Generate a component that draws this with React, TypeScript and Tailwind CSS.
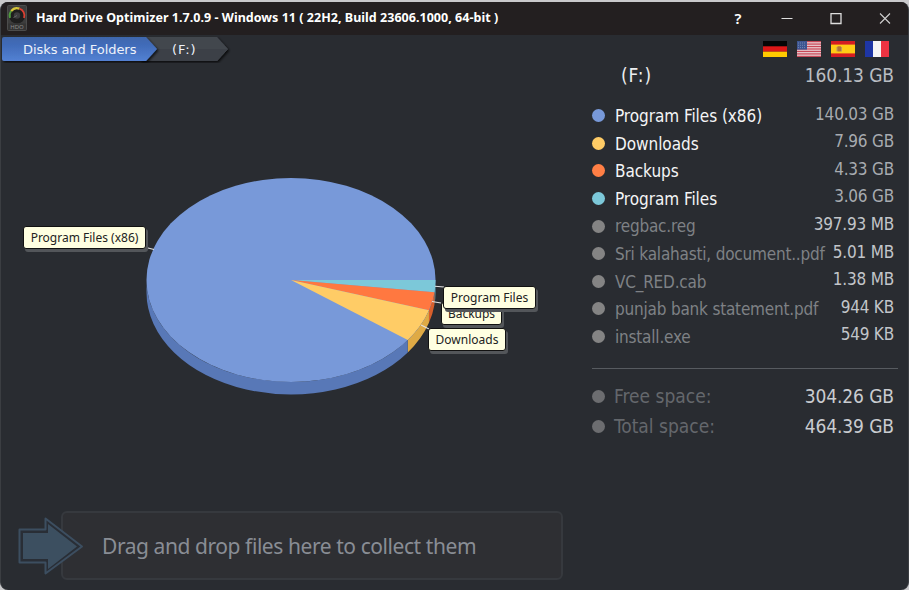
import React from 'react';
import clsx from 'clsx';

interface Entry {
  name: string;
  size: string;
  dot: string;
  folder?: boolean;
}

const entries: Entry[] = [
  { name: 'Program Files (x86)', size: '140.03 GB', dot: 'bg-[#7899d9]', folder: true },
  { name: 'Downloads', size: '7.96 GB', dot: 'bg-[#ffcc66]', folder: true },
  { name: 'Backups', size: '4.33 GB', dot: 'bg-[#ff7f45]', folder: true },
  { name: 'Program Files', size: '3.06 GB', dot: 'bg-[#7cc8d9]', folder: true },
  { name: 'regbac.reg', size: '397.93 MB', dot: 'bg-[#848484]' },
  { name: 'Sri kalahasti, document..pdf', size: '5.01 MB', dot: 'bg-[#848484]' },
  { name: 'VC_RED.cab', size: '1.38 MB', dot: 'bg-[#848484]' },
  { name: 'punjab bank statement.pdf', size: '944 KB', dot: 'bg-[#848484]' },
  { name: 'install.exe', size: '549 KB', dot: 'bg-[#848484]' },
];

const totals = [
  { name: 'Free space:', size: '304.26 GB' },
  { name: 'Total space:', size: '464.39 GB' },
];

const AppIcon: React.FC = () => (
  <svg width="20" height="26" viewBox="0 0 20 26">
    <rect x="0.5" y="0.5" width="19" height="25" rx="1" fill="#3d3d3d" stroke="#4c4c4c" />
    <circle cx="10" cy="10.5" r="8" fill="#1e1e1e" />
    <path d="M3 13 A7.3 7.3 0 0 1 4.2 6" fill="none" stroke="#4f9c3d" strokeWidth="1.8" />
    <path d="M4.2 6 A7.3 7.3 0 0 1 12.5 3.6" fill="none" stroke="#d6c53a" strokeWidth="2.2" />
    <path d="M12.5 3.6 A7.3 7.3 0 0 1 17 13" fill="none" stroke="#dc4032" strokeWidth="1.8" />
    <circle cx="10" cy="10.5" r="3.2" fill="#3c3c3e" />
    <path d="M10 10.5 L6.5 12.5" stroke="#666" strokeWidth="1" />
    <rect x="1" y="18.5" width="18" height="6.5" fill="#343434" />
    <text x="10" y="24" textAnchor="middle" fontSize="6" fill="#8a8a8a" fontFamily="Noto Sans, sans-serif">HDO</text>
  </svg>
);

const TitleBar: React.FC = () => (
  <header className="flex h-[33px] items-center bg-[#231f20] text-white">
    <div className="ml-1.5 -mt-0.5">
      <AppIcon />
    </div>
    <h1 className="ml-[9px] flex-1 whitespace-nowrap text-[12.5px] font-bold tracking-[0.03px]">
      Hard Drive Optimizer 1.7.0.9 - Windows 11 ( 22H2, Build 23606.1000, 64-bit )
    </h1>
    <button className="w-12 text-[15px] leading-none font-semibold">?</button>
    <button className="flex w-[50px] justify-center">
      <svg width="12" height="12" viewBox="0 0 12 12" stroke="#dedede" strokeWidth="1.2"><path d="M0.5 5.5h11" /></svg>
    </button>
    <button className="flex w-[48px] justify-center">
      <svg width="12" height="12" viewBox="0 0 12 12" fill="none" stroke="#dedede" strokeWidth="1.3"><path d="M1 0.5h10v10H1z" /></svg>
    </button>
    <button className="mr-[-1px] flex w-[49px] justify-center">
      <svg width="12" height="12" viewBox="0 0 12 12" stroke="#cfcfcf" strokeWidth="1.1"><path d="M1 0.5l10 10M11 0.5L1 10.5" /></svg>
    </button>
  </header>
);

const Breadcrumbs: React.FC = () => (
  <nav className="relative h-7 w-[240px]">
    <svg className="absolute inset-0" width="240" height="28" viewBox="0 0 240 28">
      <defs>
        <linearGradient id="root-crumb" x1="0" y1="0" x2="0" y2="1">
          <stop offset="0" stopColor="#3e66ad" />
          <stop offset="0.4" stopColor="#426dbb" />
          <stop offset="1" stopColor="#5381d3" />
        </linearGradient>
        <filter id="crumb-shadow" x="-10%" y="-20%" width="120%" height="150%">
          <feDropShadow dx="1.5" dy="1.5" stdDeviation="1.2" floodColor="#000" floodOpacity="0.75" />
        </filter>
      </defs>
      <path d="M140 2H217L228 14L217 26H140Z" fill="#43474e" filter="url(#crumb-shadow)" />
      <path d="M140 14H228L217 26H140Z" fill="#3c4047" />
      <path d="M4 2H146L157 14L146 26H4Q2 26 2 24V4Q2 2 4 2Z" fill="url(#root-crumb)" filter="url(#crumb-shadow)" />
    </svg>
    <div className="relative flex h-[30px] items-center font-['DejaVu_Sans',sans-serif] text-[13px] text-[#eef2fa]">
      <span className="ml-[23px] w-[149px] tracking-[-0.06px]">Disks and Folders</span>
      <span className="tracking-[0.9px]">(F:)</span>
    </div>
  </nav>
);

const cx = 291;
const cy = 280;
const rx = 144.5;
const ry = 102;
const depth = 12.5;

const rim = (deg: number, dy = 0) => {
  const t = (deg * Math.PI) / 180;
  return `${(cx + rx * Math.cos(t)).toFixed(2)} ${(cy + dy + ry * Math.sin(t)).toFixed(2)}`;
};

const slices = [
  { from: 0, to: 6.9, top: '#7cc8d9', side: '#5fa9bc' },
  { from: 6.9, to: 17.3, top: '#ff7840', side: '#d85f2c' },
  { from: 17.3, to: 36.1, top: '#ffcc66', side: '#dfaa45' },
  { from: 36.1, to: 180, top: '#7899d9', side: '#5878b7' },
];

const PieChart: React.FC = () => (
  <svg className="absolute left-0 top-[-63px]" width="580" height="420" viewBox="0 0 580 420">
    {slices.map((s) => (
      <path
        key={s.side}
        d={`M${rim(s.from)} A${rx} ${ry} 0 0 1 ${rim(s.to)} L${rim(s.to, depth)} A${rx} ${ry} 0 0 0 ${rim(s.from, depth)}Z`}
        fill={s.side}
      />
    ))}
    <ellipse cx={cx} cy={cy} rx={rx} ry={ry} fill="#7899d9" />
    {slices.slice(0, 3).map((s) => (
      <path key={s.top} d={`M${cx} ${cy} L${rim(s.from)} A${rx} ${ry} 0 0 1 ${rim(s.to)}Z`} fill={s.top} />
    ))}
    <g stroke="#e3e3e3" strokeWidth="1.1">
      <path d="M144 247L154 249.5" />
      <path d="M435 286.3L444 287" />
      <path d="M432 301.5L441 303" />
      <path d="M421 325L429 329" />
    </g>
  </svg>
);

const labels = [
  { text: 'Program Files (x86)', place: 'left-[23px] top-[163px] w-[123px]' },
  { text: 'Backups', place: 'left-[441px] top-[239px] w-[61px]' },
  { text: 'Downloads', place: 'left-[428px] top-[265px] w-[78px]' },
  { text: 'Program Files', place: 'left-[443px] top-[223px] w-[93px]' },
];

const Chart: React.FC = () => (
  <div className="relative h-[448px]">
    <PieChart />
    {labels.map((l) => (
      <div
        key={l.text}
        className={clsx(
          'absolute flex h-[23px] items-center justify-center whitespace-nowrap rounded-[3px] border border-[#111] bg-[#ffffe1] text-[12px] text-[#222] shadow-[2px_3px_0_#53565a]',
          l.place,
        )}
      >
        {l.text}
      </div>
    ))}
  </div>
);

const DropZone: React.FC = () => (
  <div className="relative ml-[61px] flex h-[69px] w-[502px] items-center rounded-md border-2 border-[#36393e] bg-[#2e2f33]">
    <svg className="absolute left-[-47px] top-[2px]" width="70" height="60" viewBox="0 0 70 60">
      <path
        d="M3.5 15.5H29.5V4.5L66 32.5L29.5 59.5V48.5H3.5Z"
        transform="translate(0 -1)"
        fill="#292e36"
        stroke="#3c4e60"
        strokeWidth="2"
        strokeLinejoin="round"
      />
      <path d="M7 18H32V9L61 31.5L32 54V44H7Z" fill="#3c4f60" />
    </svg>
    <span className="mt-[3px] ml-[39px] whitespace-nowrap text-[21px] tracking-[-0.43px] text-[#898d95]">Drag and drop files here to collect them</span>
  </div>
);

const Flags: React.FC = () => (
  <div className="mr-5 flex h-[27px] items-center justify-end gap-2.5">
    <svg width="24" height="16" viewBox="0 0 24 16">
      <rect width="24" height="6" fill="#050505" />
      <rect y="5.3" width="24" height="5.4" fill="#dd1717" />
      <rect y="10.7" width="24" height="5.3" fill="#ffca00" />
    </svg>
    <svg width="24" height="16" viewBox="0 0 24 16">
      <rect width="24" height="16" fill="#e9cfd2" />
      {[0, 2.46, 4.92, 7.38, 9.84, 12.3, 14.76].map((y) => (
        <rect key={y} y={y} width="24" height="1.23" fill="#c84858" />
      ))}
      <rect width="10" height="8.6" fill="#3d5590" />
      <path d="M1 2h8M1 4.3h8M1 6.6h8" stroke="#8192bb" strokeWidth="0.8" strokeDasharray="1 1" />
    </svg>
    <svg width="24" height="16" viewBox="0 0 24 16">
      <rect width="24" height="16" fill="#d51d22" />
      <rect y="3.6" width="24" height="8.8" fill="#ffcc16" />
      <rect x="6.2" y="5.2" width="4" height="5.4" rx="1" fill="#b27339" />
      <path d="M6 6v4.5M10.5 6v4.5" stroke="#a99173" strokeWidth="0.8" />
    </svg>
    <svg width="24" height="16" viewBox="0 0 24 16">
      <rect width="24" height="16" fill="#f5f5f5" />
      <rect width="8" height="16" fill="#1e36a5" />
      <rect x="16" width="8" height="16" fill="#ed3342" />
    </svg>
  </div>
);

const Sidebar: React.FC = () => (
  <aside className="w-[317px] shrink-0 font-['DejaVu_Sans_Condensed','DejaVu_Sans',sans-serif] [font-stretch:condensed]">
    <Flags />
    <div className="mr-[15px] ml-[29px] flex h-7 items-center justify-between text-[19px]">
      <span className="-mt-px tracking-[0.9px] text-[#eceef0]">(F:)</span>
      <span className="-mt-px tracking-[-0.1px] text-[#b9bdc2]">160.13 GB</span>
    </div>
    <ul className="mt-[11px] mr-[15px]">
      {entries.map((e) => (
        <li key={e.name} className="flex h-[27.6px] items-center whitespace-nowrap text-[17px]">
          <span className={clsx('mt-0.5 size-[13px] shrink-0 rounded-full', e.dot)} />
          <span
            className={clsx(
              'mt-1 ml-[10px] w-0 flex-1',
              e.folder ? 'tracking-[-0.05px] text-[#f4f5f6]' : 'tracking-[-0.2px] text-[#7e8185]',
            )}
          >
            {e.name}
          </span>
          <span className={clsx('-mt-px tracking-[-0.2px]', e.folder ? 'text-[#a7abb0]' : 'text-[#c2c5c9]')}>
            {e.size}
          </span>
        </li>
      ))}
    </ul>
    <hr className="mt-[19px] mr-[11px] mb-3 border-[#575b60]" />
    <ul className="mr-[15px]">
      {totals.map((t) => (
        <li key={t.name} className="flex h-[30px] items-center text-[19px]">
          <span className="size-[13px] rounded-full bg-[#6c6d70]" />
          <span className="ml-[9px] flex-1 text-[#64676c]">{t.name}</span>
          <span className="tracking-[-0.1px] text-[#c9ccd0]">{t.size}</span>
        </li>
      ))}
    </ul>
  </aside>
);

const App: React.FC = () => {
  return (
    <div className="h-[590px] w-[909px] overflow-hidden bg-[#c9c9cb] pt-0.5 font-['Noto_Sans',sans-serif]">
      <div className="h-[588px] overflow-hidden rounded-lg border-r border-l border-[#3b3e42] bg-[#292c31]">
        <TitleBar />
        <main className="-ml-px flex">
          <section className="w-[592px] shrink-0">
            <Breadcrumbs />
            <Chart />
            <DropZone />
          </section>
          <Sidebar />
        </main>
      </div>
    </div>
  );
};

export default App;
